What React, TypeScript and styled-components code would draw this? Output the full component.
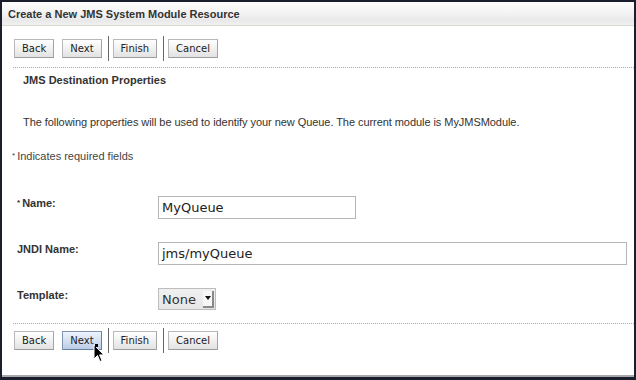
import React from "react";
import styled, { createGlobalStyle } from "styled-components";

const Global = createGlobalStyle`
  html, body { margin: 0; padding: 0; background: #1b1f2d; }
  body { width: 636px; height: 380px; overflow: hidden; }
  * { box-sizing: border-box; }
`;

const Panel = styled.div`
  position: relative;
  margin: 2px 2px 0 2px;
  width: 632px;
  height: 375px;
  background: #ffffff;
  border-bottom: 2px solid #a8aab0;
  font-family: "Liberation Sans", Arial, sans-serif;
  color: #333;
`;

const Header = styled.div`
  height: 24px;
  display: flex;
  align-items: center;
  padding-left: 6px;
  background: linear-gradient(#fdfdfd, #f4f4f4 45%, #e9e9e9 80%, #f1f1f1);
  border-bottom: 1px solid #d8dacf;
  font-size: 11px;
  font-weight: bold;
  color: #333;
`;

const Toolbar = styled.div<{ $top: number }>`
  margin-top: ${(p) => p.$top}px;
  height: 25px;
  padding-left: 12px;
  display: flex;
  align-items: center;
  gap: 8px;
`;

const Button = styled.button<{ $hot?: boolean }>`
  height: 19px;
  padding: 0 7px;
  font-family: "DejaVu Sans", sans-serif;
  font-size: 10px;
  color: #222;
  border: 1px solid ${(p) => (p.$hot ? "#8193b3" : "#b9b9b9")};
  border-bottom-color: ${(p) => (p.$hot ? "#6d7fa0" : "#9c9c9c")};
  border-right-color: ${(p) => (p.$hot ? "#6d7fa0" : "#a4a4a4")};
  background: ${(p) =>
    p.$hot
      ? "linear-gradient(#eef3fc, #d5e0f2 50%, #bccde8)"
      : "linear-gradient(#ffffff, #f1f1f1 50%, #e2e2e2)"};
  border-radius: 0;
  cursor: default;
`;

const Separator = styled.span`
  width: 1px;
  height: 25px;
  background: #6a6a6a;
  margin: 0 -4px 0 -2px;
`;

const Dotted = styled.div<{ $top: number }>`
  margin-top: ${(p) => p.$top}px;
  margin-left: 11px;
  border-top: 1px dotted #a9a9a9;
`;

const Heading = styled.div`
  margin: 5px 0 0 21px;
  line-height: 14px;
  font-size: 11px;
  font-weight: bold;
  color: #333;
`;

const Para = styled.div`
  margin: 28px 0 0 21px;
  line-height: 14px;
  font-size: 11px;
  letter-spacing: -0.06px;
  color: #333;
`;

const Note = styled.div`
  margin: 20px 0 0 10px;
  line-height: 14px;
  font-size: 11px;
  color: #444;
`;

const Star = styled.span`
  font-size: 8px;
  vertical-align: 2px;
  margin-right: 2px;
`;

const Form = styled.div`
  margin: 33px 0 0 15px;
  display: grid;
  grid-template-columns: 141px 1fr;
  row-gap: 23px;
`;

const Label = styled.div`
  line-height: 14px;
  font-size: 11px;
  font-weight: bold;
  color: #333;
`;

const TextInput = styled.div<{ $w: number }>`
  width: ${(p) => p.$w}px;
  height: 23px;
  border: 1px solid #b5b5b5;
  padding-left: 3px;
  display: flex;
  align-items: center;
  font-family: "DejaVu Sans", sans-serif;
  font-size: 13px;
  color: #222;
  background: #fff;
`;

const Select = styled.div`
  width: 58px;
  height: 22px;
  border: 1px solid #bdbdbd;
  background: linear-gradient(#f0f0f0, #e6e6e6);
  display: flex;
  align-items: center;
  padding-left: 3px;
  font-family: "DejaVu Sans", sans-serif;
  font-size: 13px;
  color: #333;
`;

const ArrowBox = styled.span`
  margin-left: auto;
  margin-right: 1px;
  width: 11px;
  height: 17px;
  background: #f7f7f7;
  border-right: 2px solid #8a8a8a;
  border-bottom: 2px solid #8a8a8a;
  display: flex;
  align-items: center;
  justify-content: center;
`;

const Cursor = styled.svg`
  position: absolute;
  left: 91px;
  top: 342px;
`;

const Buttons = ({ hot, top }: { hot?: boolean; top: number }) => (
  <Toolbar $top={top}>
    <Button>Back</Button>
    <Button $hot={hot}>Next</Button>
    <Separator />
    <Button>Finish</Button>
    <Separator />
    <Button>Cancel</Button>
  </Toolbar>
);

export default function App() {
  return (
    <>
      <Global />
      <Panel>
        <Header>Create a New JMS System Module Resource</Header>
        <Buttons top={10} />
        <Dotted $top={6} />
        <Heading>JMS Destination Properties</Heading>
        <Para>
          The following properties will be used to identify your new Queue. The current module is MyJMSModule.
        </Para>
        <Note>
          <Star>*</Star>Indicates required fields
        </Note>
        <Form>
          <Label>
            <Star>*</Star>Name:
          </Label>
          <TextInput $w={198}>MyQueue</TextInput>
          <Label>JNDI Name:</Label>
          <TextInput $w={469}>jms/myQueue</TextInput>
          <Label>Template:</Label>
          <Select>
            None
            <ArrowBox>
              <svg width="6" height="4" viewBox="0 0 6 4">
                <path d="M0 0 H6 L3 4 Z" fill="#111" />
              </svg>
            </ArrowBox>
          </Select>
        </Form>
        <Dotted $top={13} />
        <Buttons hot top={4} />
        <Cursor width="12" height="19" viewBox="0 0 12 19">
          <path d="M1 1 L1 15 L4.5 11.5 L7 17.5 L9 16.6 L6.6 10.9 L11 10.9 Z" fill="#000" stroke="#fff" strokeWidth="1" />
          <rect x="2" y="0" width="3" height="3" fill="#000" />
        </Cursor>
      </Panel>
    </>
  );
}
